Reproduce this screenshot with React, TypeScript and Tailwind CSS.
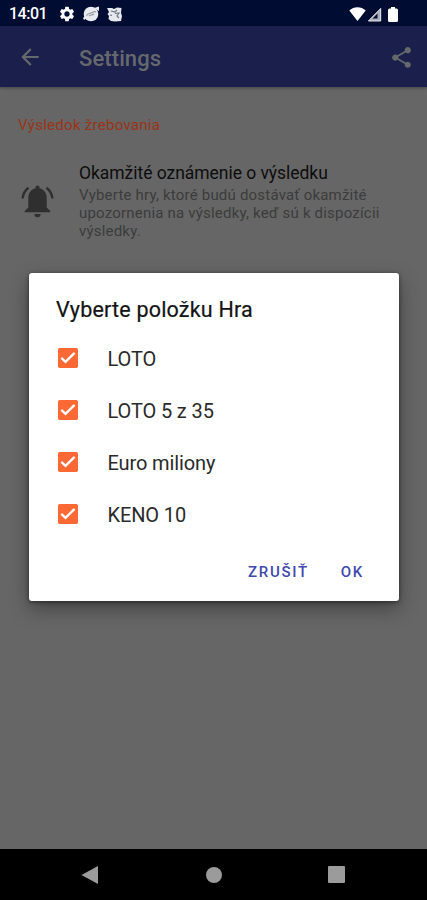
import { MdArrowBack, MdSettings, MdShare } from 'react-icons/md';

function StatusBar() {
    return (
        <div className="flex h-[26px] items-center bg-[#000c31] pt-0.5 text-white">
            <span className="ml-[9px] w-[49px] text-[16px] font-medium leading-none tracking-[-0.5px]">14:01</span>
            <MdSettings className="size-[18px]" />
            <svg className="ml-1.5 size-[18px]" viewBox="0 0 18 18">
                <circle cx="9" cy="9" r="7.3" fill="#e9ebee" />
                <path d="M1 13 L4 10 L6 12 L2 15Z M12 3 L17 1.5 L17 6Z" fill="#e9ebee" />
                <path d="M4.500 10.500 C6 7.500 9 9 11 7.200 C12.500 6 13.500 6.500 14 7.500 M7 11 C8.500 9.500 10 10.500 12 9" fill="none" stroke="#8b93a0" strokeWidth="1.100" />
            </svg>
            <svg className="ml-1.5 size-[17px]" viewBox="0 0 17 17">
                <path d="M1 2 L6 2 L8 3 L11 1.500 L15.500 2 L15 7 L16 10 L15 15 L9 15.500 L5 15 L2.500 13 L3 10 L1.500 8 L3 6Z" fill="#e5e8ec" />
                <path d="M5 5 L9 6 L11 4 M9 7.500 L13 7 L11 10 L13 12 M4 9 L6 9.500" fill="none" stroke="#6f788a" strokeWidth="1.200" />
            </svg>
            <div className="mr-[29px] ml-auto flex items-center">
                <svg className="h-[14px] w-[17px]" viewBox="0 0 17 14">
                    <path d="M0.300 3.500 C4.500 -1 12.500 -1 16.700 3.500 L8.500 14Z" fill="#fff" />
                </svg>
                <svg className="ml-[1px] h-[15px] w-[15px]" viewBox="0 0 15 15">
                    <path d="M14 1 L14 14 L1 14Z" fill="#a9aeb9" />
                    <path d="M10.500 6.500 L10.500 11.500 L5.500 11.500Z" fill="#000c31" />
                    <path d="M13.700 1.500 L13.700 14 L1.500 14Z" fill="none" stroke="#e2e4e8" strokeWidth="1" />
                </svg>
                <svg className="ml-[6px] h-[15px] w-[10px]" viewBox="0 0 10 15">
                    <path d="M3 0 H7 V1.500 H8.500 Q10 1.500 10 3 V13.500 Q10 15 8.500 15 H1.500 Q0 15 0 13.500 V3 Q0 1.500 1.500 1.500 H3Z" fill="#fff" />
                </svg>
            </div>
        </div>
    );
}

function AppBar() {
    return (
        <header className="flex h-[61px] items-center bg-[#1a1f4c] text-[#66696c] shadow-[0_1px_3px_rgba(0,0,0,0.35)]">
            <MdArrowBack className="ml-[17px] size-[26px]" />
            <h1 className="ml-[36px] pt-1 text-[22px] font-medium leading-none tracking-[0.1px]">Settings</h1>
            <MdShare className="mt-px mr-[13px] ml-auto size-[25px]" />
        </header>
    );
}

function BellIcon() {
    return (
        <svg className="-mt-[1px] ml-[21px] h-[33px] w-[33px] text-[#2f2f2f]" viewBox="0 0 33 33">
            <path
                d="M16.500 0.500 C17.700 0.500 18.500 1.300 18.500 2.400 V3.300 C23 4.400 25.700 8.200 25.700 13 V22.500 L29.300 26 V27.300 H3.700 V26 L7.300 22.500 V13 C7.300 8.200 10 4.400 14.500 3.300 V2.400 C14.500 1.300 15.300 0.500 16.500 0.500Z M13.300 29 H19.700 C19.700 31 18.300 32.300 16.500 32.300 C14.700 32.300 13.300 31 13.300 29Z"
                fill="currentColor"
            />
            <path d="M1.600 13.500 Q2.200 6.700 7.500 2.700 M31.400 13.500 Q30.800 6.700 25.500 2.700" fill="none" stroke="currentColor" strokeWidth="2.400" />
        </svg>
    );
}

function CheckedBox() {
    return (
        <svg className="ml-[29px] size-[20px]" viewBox="0 0 20 20">
            <rect width="20" height="20" rx="1.800" fill="#fc6935" />
            <path d="M3.300 9.800 L7.500 13.800 L16.600 4.900" fill="none" stroke="#fff" strokeWidth="2.300" />
        </svg>
    );
}

function NotificationSetting() {
    return (
        <section className="pt-[29px]">
            <h2 className="ml-[18px] text-[15px] leading-[18px] tracking-[0.280px] text-[#9a3418]">Výsledok žrebovania</h2>
            <div className="mt-[29px] flex items-center">
                <BellIcon />
                <div className="ml-[25px]">
                    <h3 className="text-[17.500px] leading-[20px] tracking-[-0.040px] text-[#0d0d0d]">Okamžité oznámenie o výsledku</h3>
                    <p className="mt-[3px] w-[330px] text-[15px] leading-[18px] tracking-[0.200px] text-[#3c3c3c]">
                        Vyberte hry, ktoré budú dostávať okamžité
                        <br />
                        upozornenia na výsledky, keď sú k dispozícii
                        <br />
                        výsledky.
                    </p>
                </div>
            </div>
        </section>
    );
}

function GameDialog() {
    const games = ['LOTO', 'LOTO 5 z 35', 'Euro miliony', 'KENO 10'];

    return (
        <div
            role="dialog"
            className="absolute top-[273px] left-[29px] flex h-[328px] w-[370px] flex-col rounded-[3px] bg-white shadow-[0_8px_20px_rgba(0,0,0,0.35),0_1px_4px_rgba(0,0,0,0.5)]"
        >
            <h2 className="mt-[24px] ml-[27px] text-[21.500px] leading-[26px] tracking-[0.200px] text-[#141414] [-webkit-text-stroke:0.2px_#141414]">
                Vyberte položku Hra
            </h2>
            <ul className="mt-[9px]">
                {games.map((game) => (
                    <li key={game} className="flex h-[52px] items-center">
                        <CheckedBox />
                        <span className="mt-px ml-[29.500px] text-[20px] leading-none tracking-[-0.120px] text-[#2a2a2a]">{game}</span>
                    </li>
                ))}
            </ul>
            <div className="mt-[22px] mr-[35px] flex justify-end gap-[32px] text-[15px] font-medium leading-[20px] tracking-[1.700px] text-[#3f4aac]">
                <button>ZRUŠIŤ</button>
                <button>OK</button>
            </div>
        </div>
    );
}

function NavigationBar() {
    return (
        <nav className="mt-auto flex h-[51px] items-center bg-black text-[#9b9b9b]">
            <svg className="ml-[81px] size-[18px]" viewBox="0 0 18 18">
                <path d="M0.500 9 L17 0 V18Z" fill="currentColor" />
            </svg>
            <div className="ml-[107px] size-[16px] rounded-full bg-[#9b9b9b]" />
            <div className="ml-[106px] size-[17px] rounded-[1px] bg-[#9b9b9b]" />
        </nav>
    );
}

export default function App() {
    return (
        <div className="relative flex h-[900px] w-[427px] flex-col overflow-hidden bg-[#666666] font-[Roboto,sans-serif]">
            <StatusBar />
            <AppBar />
            <NotificationSetting />
            <NavigationBar />
            <GameDialog />
        </div>
    );
}
